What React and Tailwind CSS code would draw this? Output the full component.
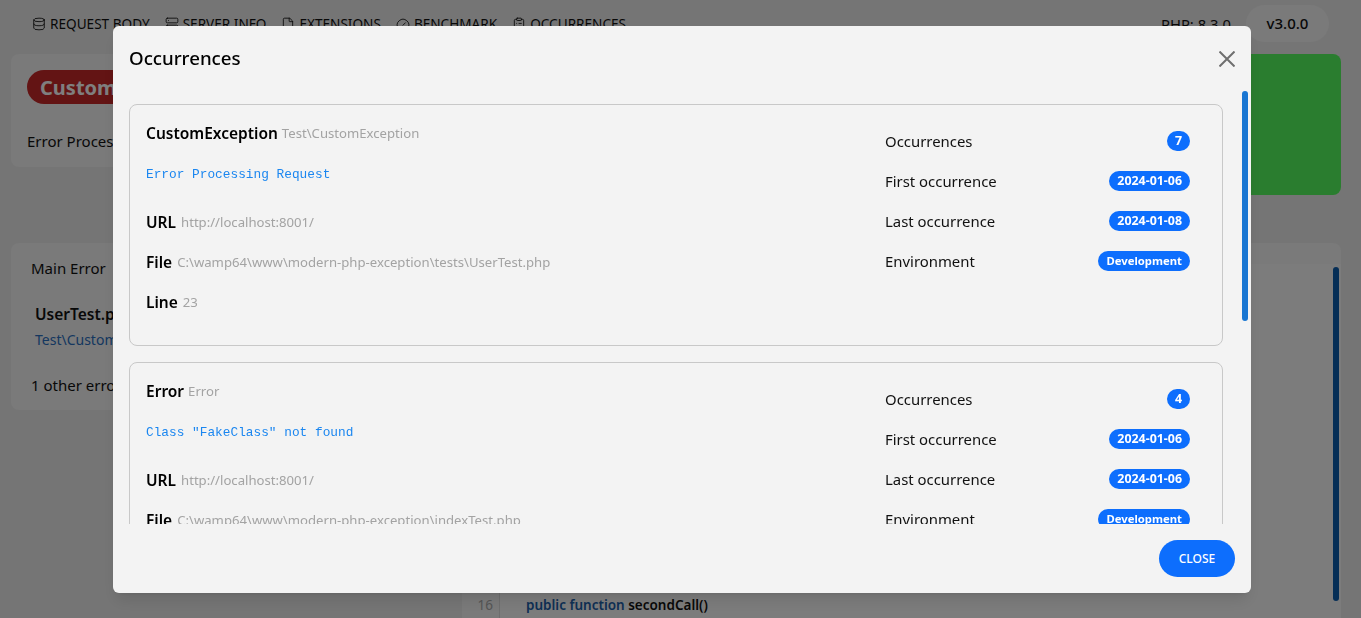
import { Database, Server, File, Gauge, ClipboardList } from 'lucide-react';

const occurrences = [
  {
    name: 'CustomException',
    fqn: 'Test\\CustomException',
    message: 'Error Processing Request',
    url: 'http://localhost:8001/',
    file: 'C:\\wamp64\\www\\modern-php-exception\\tests\\UserTest.php',
    line: 23,
    count: 7,
    first: '2024-01-06',
    last: '2024-01-08',
    env: 'Development',
  },
  {
    name: 'Error',
    fqn: 'Error',
    message: 'Class "FakeClass" not found',
    url: 'http://localhost:8001/',
    file: 'C:\\wamp64\\www\\modern-php-exception\\indexTest.php',
    line: 3,
    count: 4,
    first: '2024-01-06',
    last: '2024-01-06',
    env: 'Development',
  },
];

const tabs = [
  { label: 'REQUEST BODY', Icon: Database },
  { label: 'SERVER INFO', Icon: Server },
  { label: 'EXTENSIONS', Icon: File },
  { label: 'BENCHMARK', Icon: Gauge },
  { label: 'OCCURRENCES', Icon: ClipboardList },
];

function Field({ label, value }) {
  return (
    <div className="h-10 flex items-center gap-[5px]">
      <span className="text-[15.5px] font-semibold text-black">{label}</span>
      <span className="text-[13.15px] text-[#a3a3a3]">{value}</span>
    </div>
  );
}

function Stat({ label, size = 'text-[12.4px]', children }) {
  return (
    <div className="h-10 flex items-center justify-between">
      <span className="pt-px text-[14.9px] text-[#111]">{label}</span>
      <span className={`h-5 min-w-[23px] px-2 rounded-full bg-[#0d6efd] text-white font-bold flex items-center justify-center ${size}`}>
        {children}
      </span>
    </div>
  );
}

function OccurrenceCard({ item }) {
  return (
    <div className="shrink-0 h-[242px] border border-[#c8c8c8] rounded-lg pl-4 pr-8 pt-4 flex justify-between">
      <div>
        <div className="h-[26px] flex items-center gap-1">
          <span className="text-[15.5px] font-semibold text-black">{item.name}</span>
          <span className="text-[13.15px] text-[#a3a3a3]">{item.fqn}</span>
        </div>
        <div className="h-5 mt-[18px] flex items-center font-['Liberation_Mono',monospace] text-[12.8px] text-[#1a86f0]">
          {item.message}
        </div>
        <div className="mt-[18px]">
          <Field label="URL" value={item.url} />
          <Field label="File" value={item.file} />
          <Field label="Line" value={item.line} />
        </div>
      </div>
      <div className="w-[305px]">
        <Stat label="Occurrences">{item.count}</Stat>
        <Stat label="First occurrence">{item.first}</Stat>
        <Stat label="Last occurrence">{item.last}</Stat>
        <Stat label="Environment" size="text-[11.3px]">{item.env}</Stat>
      </div>
    </div>
  );
}

export default function App() {
  return (
    <div className="relative h-[618px] overflow-hidden bg-[#ebebeb] font-['Noto_Sans',sans-serif] text-[#111]">
      {/* page behind the modal */}
      <div className="h-[54px] pl-8 pr-8 pt-[5px] flex items-start justify-between">
        <div className="flex gap-[15px] pt-[9px] text-[13.6px]">
          {tabs.map(({ label, Icon }) => (
            <span key={label} className="flex items-center gap-1">
              <Icon size={14} strokeWidth={1.5} />
              {label}
            </span>
          ))}
        </div>
        <div className="flex items-start gap-[15px]">
          <span className="pt-2 text-[14.8px]">PHP: 8.3.0</span>
          <span className="h-[37px] w-[83px] rounded-full bg-[#f4f4f4] flex items-center justify-center text-[15px] font-medium">
            v3.0.0
          </span>
        </div>
      </div>
      <div className="ml-[11px] mr-5 flex items-start justify-between">
        <div className="w-[438px] h-[113px] bg-[#f4f4f4] rounded-lg pl-4 pt-4">
          <span className="inline-block h-[34px] px-[13px] rounded-full bg-[#c62828] text-white text-xl font-bold leading-[36px]">
            CustomException
          </span>
          <div className="mt-[26px] text-[15px]">Error Processing Request</div>
        </div>
        <div className="w-[340px] h-[141px] bg-[#54fa5e] rounded-lg" />
      </div>
      <div className="ml-[11px] mr-5 mt-[48px] flex items-start gap-3">
        <div className="w-[439px] h-[167px] bg-[#f4f4f4] rounded-lg pt-[14px] pl-5 text-[15px]">
          <div>Main Error</div>
          <div className="mt-[23px] pl-1 text-[15.5px] font-semibold">UserTest.php</div>
          <div className="mt-1 pl-1 text-sm text-[#2a6fc0]">Test\CustomException</div>
          <div className="mt-6">1 other error</div>
        </div>
        <div className="flex-1 h-[400px] bg-[#f4f4f4] rounded-t-lg pt-[21px] relative">
          <div className="h-full bg-[#f8f8f8]">
            <div className="h-[323px]" />
            <div className="flex h-[37px] items-center text-[13.5px]">
              <span className="w-[38px] h-full pr-[6px] flex items-center justify-end border-r border-[#ddd] bg-[#f4f4f4] text-[#aaa]">16</span>
              <span className="pl-[26px] font-semibold">
                <span className="text-[#1c5fa8]">public function</span> secondCall()
              </span>
            </div>
          </div>
          <div className="absolute right-[2px] top-[24px] w-[6px] h-[334px] rounded-full bg-[#0b5cad]" />
        </div>
      </div>

      {/* modal */}
      <div className="fixed inset-0 bg-black/50 flex items-start pl-[113px] pt-[26px]">
        <div className="relative w-[1138px] h-[567px] bg-[#f3f3f3] rounded-md shadow-lg flex flex-col">
          <div className="h-[65px] shrink-0 pl-4 pr-4 flex items-center justify-between">
            <h2 className="text-[18.7px] font-medium text-black">Occurrences</h2>
            <svg width="16" height="16" viewBox="0 0 16 16" className="text-[#6f6f6f]">
              <path d="M0.5 0.5 L15.5 15.5 M15.5 0.5 L0.5 15.5" stroke="currentColor" strokeWidth="2" fill="none" />
            </svg>
          </div>
          <div className="flex-1 min-h-0 overflow-hidden pl-4 pr-7 pt-[13px] flex flex-col gap-4">
            {occurrences.map((item) => (
              <OccurrenceCard key={item.name} item={item} />
            ))}
          </div>
          <div className="h-[69px] shrink-0 pr-4 flex items-center justify-end">
            <button className="w-[76px] h-[37px] rounded-full bg-[#0d6efd] text-white text-xs font-medium">
              CLOSE
            </button>
          </div>
          {/* scrollbar */}
          <div className="absolute right-[3px] top-[65px] w-[6px] h-[230px] rounded-full bg-[#1976d2]" />
        </div>
      </div>
    </div>
  );
}
